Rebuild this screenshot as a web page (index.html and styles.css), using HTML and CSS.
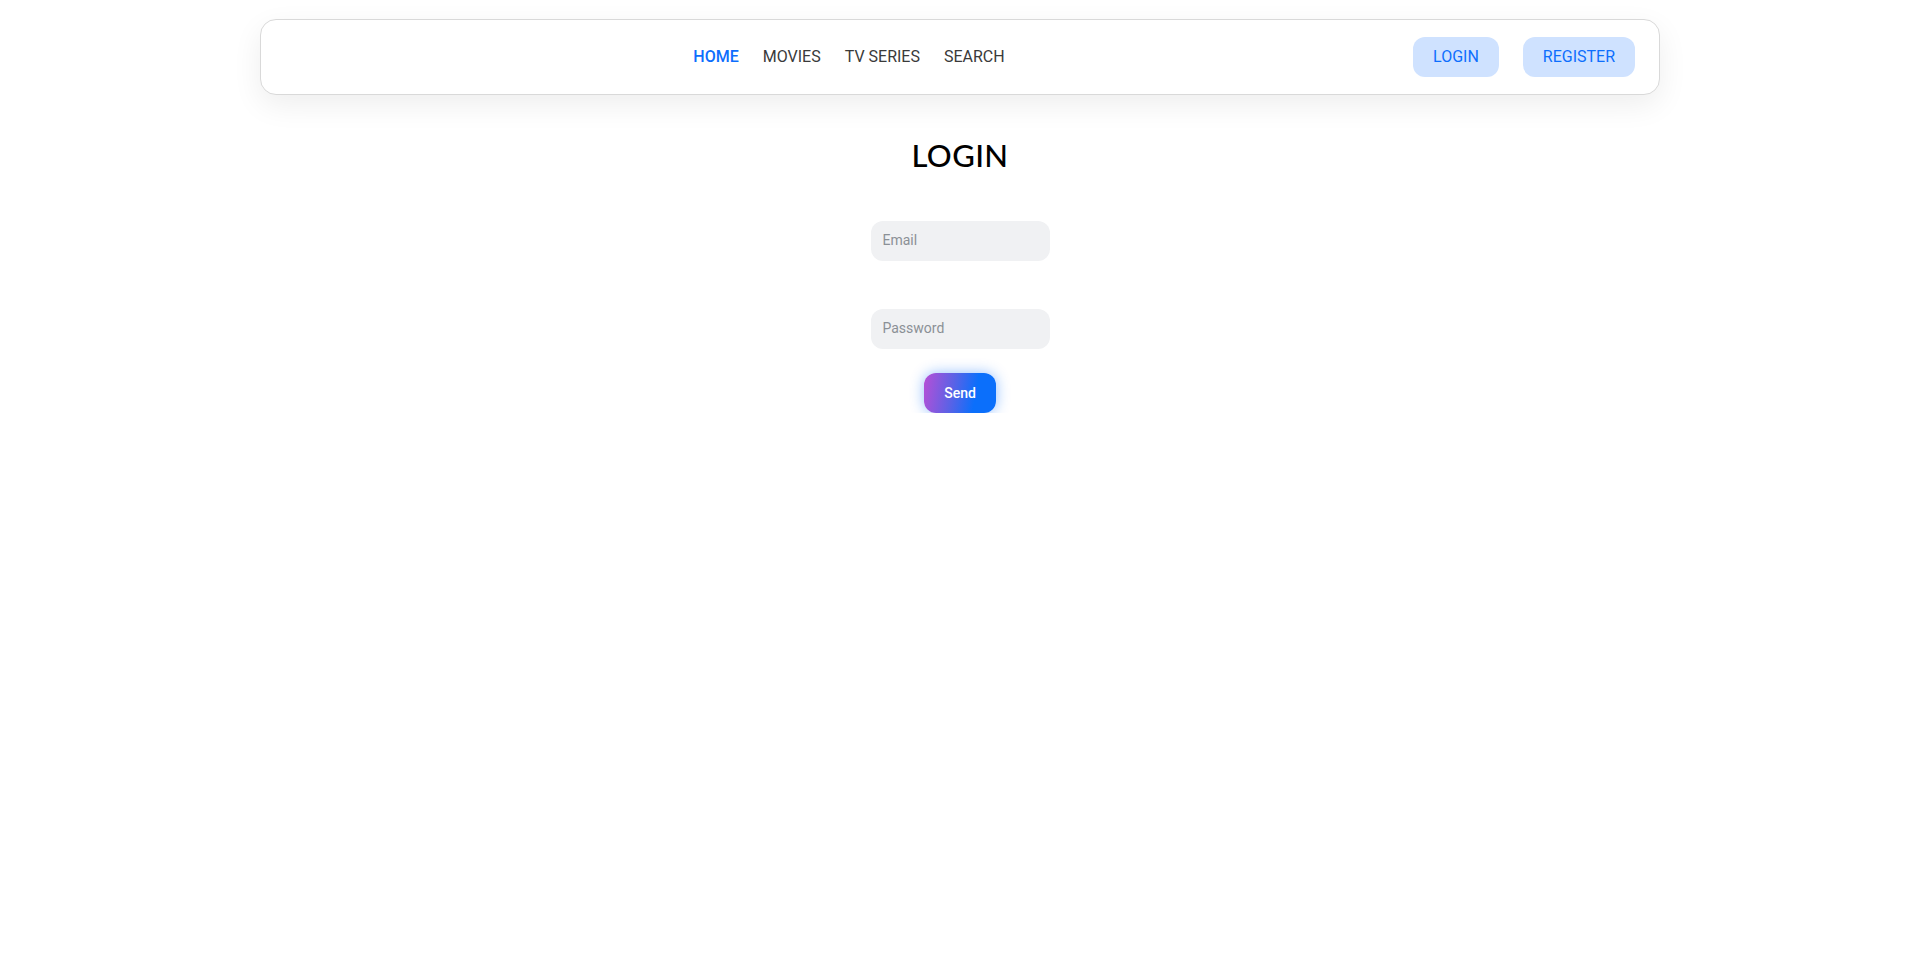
FILE: index.html
```html
<!DOCTYPE html>
<html lang="en">
<head>
<meta charset="utf-8">
<title>Login</title>
<link rel="stylesheet" href="styles.css">
</head>
<body>
<header class="navbar">
  <nav class="nav-links">
    <a class="nav-link active" href="#">HOME</a>
    <a class="nav-link" href="#">MOVIES</a>
    <a class="nav-link" href="#">TV SERIES</a>
    <a class="nav-link" href="#">SEARCH</a>
  </nav>
  <div class="nav-actions">
    <a class="nav-btn" href="#">LOGIN</a>
    <a class="nav-btn" href="#">REGISTER</a>
  </div>
</header>
<main class="main">
  <h1 class="title">LOGIN</h1>
  <form class="login-form">
    <input class="field" type="email" placeholder="Email">
    <input class="field field-password" type="password" placeholder="Password">
    <button class="send-btn" type="button">Send</button>
  </form>
</main>
</body>
</html>
```
FILE: styles.css
```css
* { box-sizing: border-box; }
html, body { margin: 0; padding: 0; background: #ffffff; }
body { font-family: Roboto, "Liberation Sans", sans-serif; color: #212529; padding-left: 2px; }

.navbar {
  width: 1400px;
  height: 76px;
  margin: 19px auto 0;
  padding: 0 24px;
  border: 1px solid #d9d9d9;
  border-radius: 16px;
  background: #ffffff;
  box-shadow: 0 10px 30px rgba(0, 0, 0, 0.07);
  display: flex;
  align-items: center;
}
.nav-links {
  margin: 0 auto;
  display: flex;
  gap: 24px;
}
.nav-link {
  font-size: 16px;
  line-height: 20px;
  color: #3a3a3a;
  text-decoration: none;
}
.nav-link.active { color: #0d6efd; font-weight: 500; }

.nav-actions { display: flex; gap: 24px; }
.nav-btn {
  display: block;
  padding: 10px 20px;
  font-size: 16px;
  line-height: 20px;
  color: #0d6efd;
  background: #cfe2ff;
  border-radius: 12px;
  text-decoration: none;
}

.main {
  padding-top: 42px;
  display: flex;
  flex-direction: column;
  align-items: center;
}
.title {
  margin: 0;
  font-family: Lato, "Liberation Sans", sans-serif;
  font-weight: 500;
  font-size: 31px;
  letter-spacing: 0.4px;
  line-height: 36px;
  color: #000;
}
.login-form {
  margin-top: 48px;
  display: flex;
  flex-direction: column;
  align-items: center;
}
.field {
  width: 179px;
  height: 40px;
  padding: 0 12px 3px;
  border: none;
  border-radius: 12px;
  background: #f0f1f3;
  font-family: Roboto, "Liberation Sans", sans-serif;
  font-size: 14px;
  color: #212529;
  outline: none;
}
.field::placeholder { color: #8b9096; }
.field-password { margin-top: 48px; }
.send-btn {
  margin-top: 24px;
  width: 72px;
  height: 40px;
  border: none;
  border-radius: 12px;
  background: linear-gradient(100deg, #b84fd6 0%, #5a62e6 40%, #0b6ffb 70%);
  box-shadow: 0 0 14px rgba(13, 110, 253, 0.45);
  color: #ffffff;
  font-family: Roboto, "Liberation Sans", sans-serif;
  font-size: 14px;
  font-weight: 500;
  cursor: pointer;
}
```
